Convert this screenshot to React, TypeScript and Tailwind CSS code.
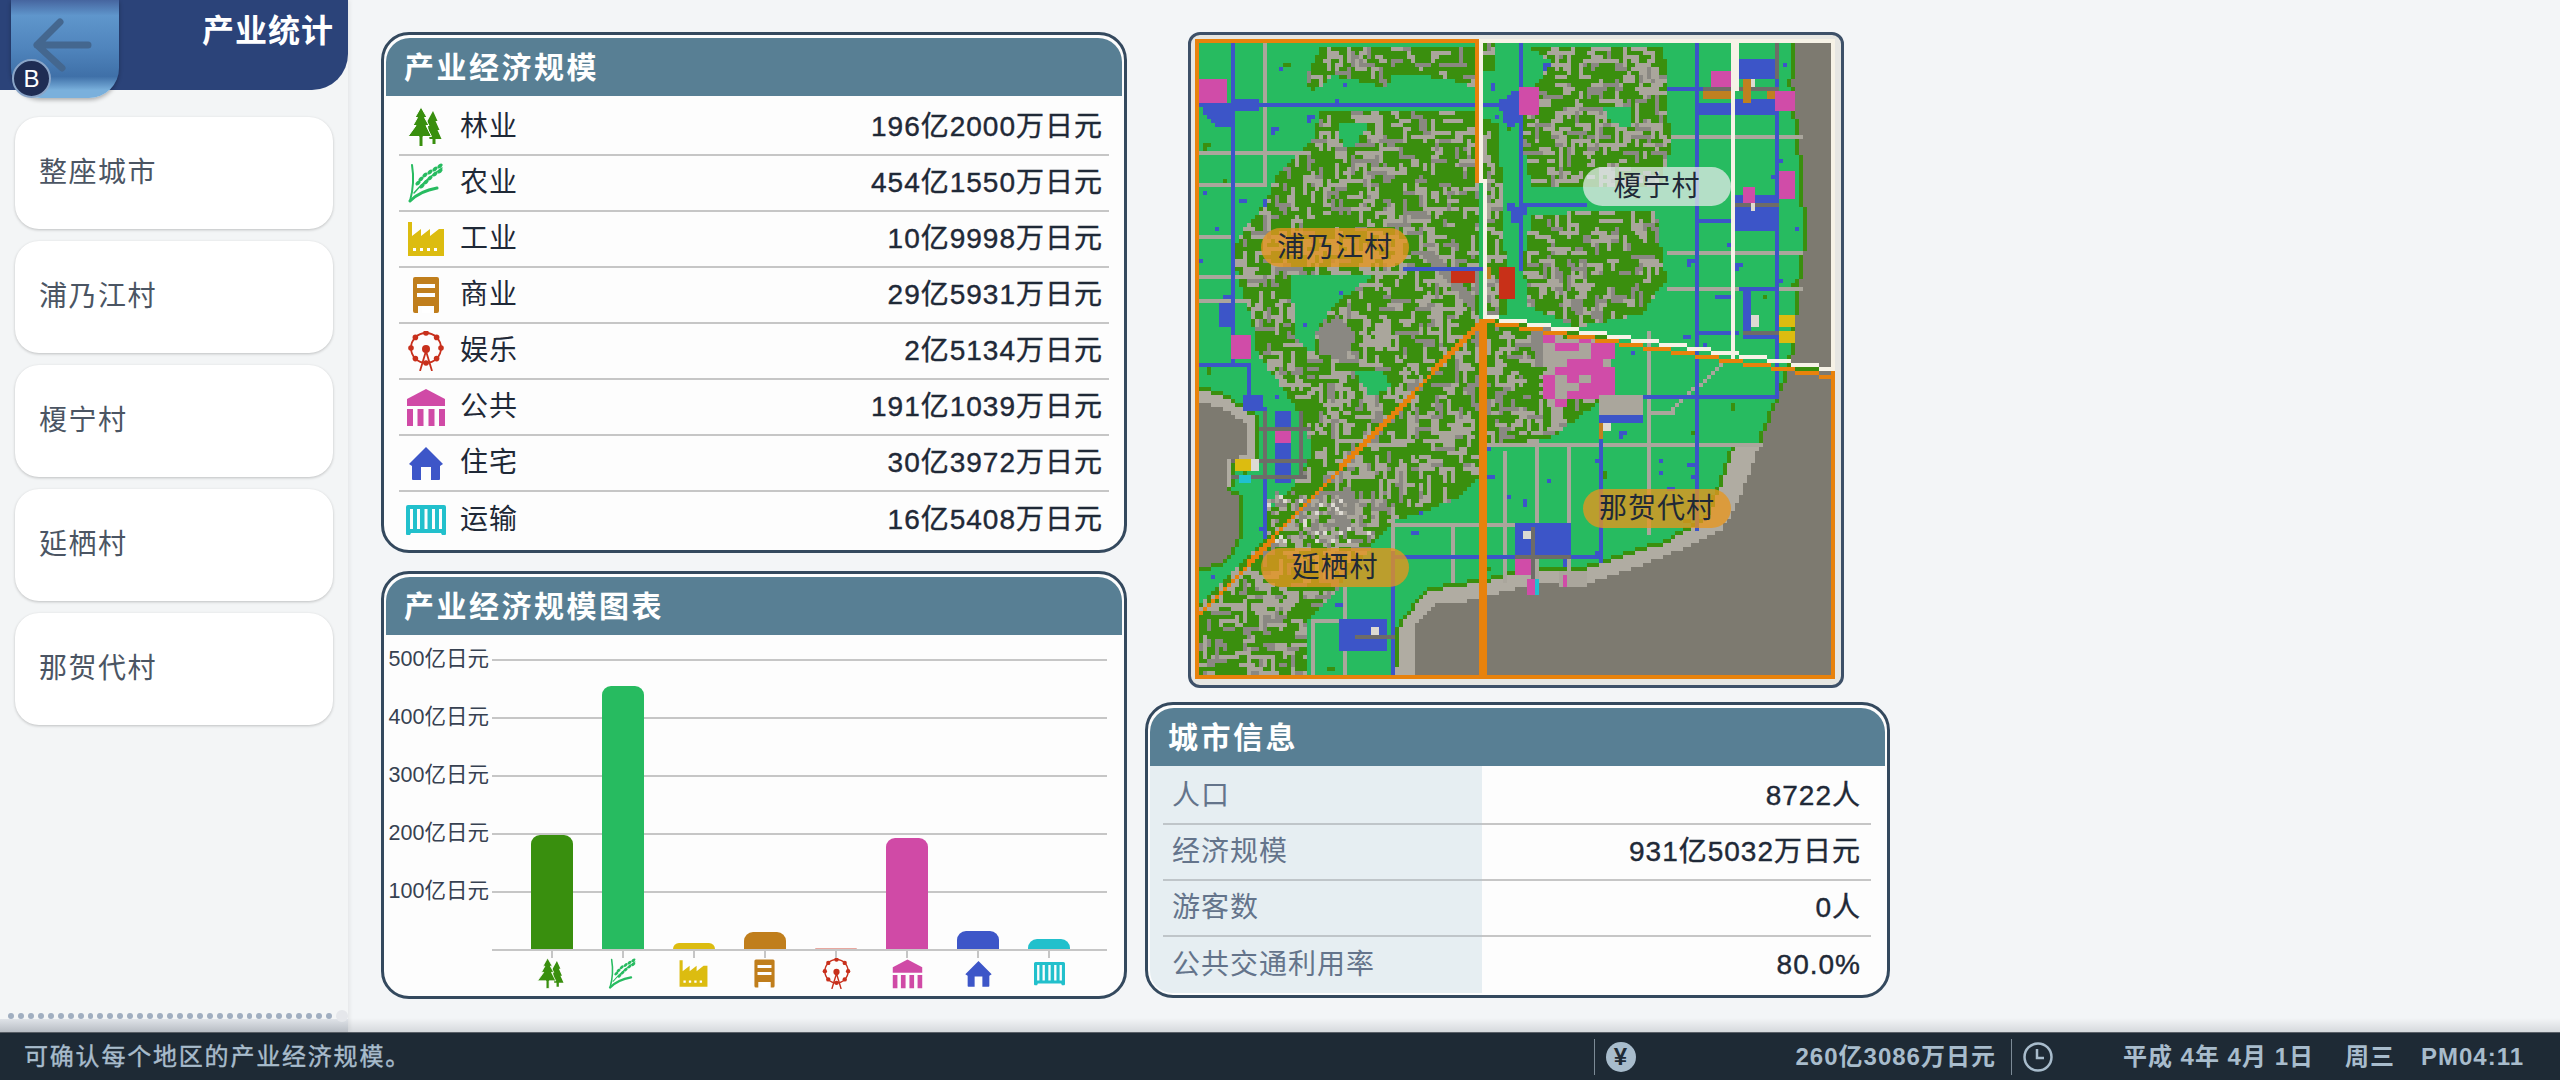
import type { ReactNode } from "react";

// tile map: 160 x 160 tiles at 4px. Coordinates below were traced from a zoomed crop.
const N = 160;
const COLORS = ["#27bb60", "#3a8f0e", "#aaa69c", "#8a8882", "#3c55c8", "#6e6c68", "#d04ca8", "#c83018", "#dcbc10", "#c08020", "#dddad2", "#20c0d0", "#7d7a70", "#b0aca2", "#e8820c", "#f6f2e6"];
const [G, F, R, M, B, D, P, X, Y, O, W, C, S, H, A, E] = COLORS.map((_, i) => i);

function buildMap() {
  const grid = new Uint8Array(N * N);
  const mask = new Uint8Array(N * N);
  let seed = 90210;
  const rnd = () => {
    seed = (seed + 0x6d2b79f5) | 0;
    let t = Math.imul(seed ^ (seed >>> 15), 1 | seed);
    t = (t + Math.imul(t ^ (t >>> 7), 61 | t)) ^ t;
    return ((t ^ (t >>> 14)) >>> 0) / 4294967296;
  };
  const tx = (z: number) => Math.round((z - 34) / 9.09);
  const ty = (z: number) => Math.round((z - 46) / 9.22);
  const put = (c: number, x: number, y: number) => {
    if (x >= 0 && y >= 0 && x < N && y < N) grid[y * N + x] = c;
  };
  const box = (c: number, x1: number, y1: number, x2: number, y2: number) => {
    for (let y = ty(y1); y < ty(y2); y++) for (let x = tx(x1); x < tx(x2); x++) put(c, x, y);
  };
  const line = (c: number, x1: number, y1: number, x2: number, y2: number) => {
    const a = [tx(x1), ty(y1)];
    const b = [tx(x2), ty(y2)];
    const n = Math.max(Math.abs(b[0] - a[0]), Math.abs(b[1] - a[1]), 1);
    for (let i = 0; i <= n; i++) put(c, Math.round(a[0] + ((b[0] - a[0]) * i) / n), Math.round(a[1] + ((b[1] - a[1]) * i) / n));
  };
  const poly = (pts: number[][], fn: (x: number, y: number) => void) => {
    const p = pts.map(([x, y]) => [(x - 34) / 9.09, (y - 46) / 9.22]);
    for (let y = 0; y < N; y++)
      for (let x = 0; x < N; x++) {
        let inside = false;
        for (let i = 0, j = p.length - 1; i < p.length; j = i++) {
          if (p[i][1] > y + 0.5 !== p[j][1] > y + 0.5 && x + 0.5 < ((p[j][0] - p[i][0]) * (y + 0.5 - p[i][1])) / (p[j][1] - p[i][1]) + p[i][0]) inside = !inside;
        }
        if (inside) fn(x, y);
      }
  };
  const fill = (c: number, pts: number[][]) => poly(pts, (x, y) => put(c, x, y));
  const forest = (pts: number[][]) =>
    poly(pts, (x, y) => {
      put(F, x, y);
      mask[y * N + x] = 1;
    });
  const clearing = (pts: number[][]) =>
    poly(pts, (x, y) => {
      put(G, x, y);
      mask[y * N + x] = 0;
    });

  // forests
  forest([[320, 215], [300, 280], [220, 360], [190, 430], [140, 490], [120, 540], [140, 620], [165, 700], [170, 760], [280, 920], [300, 1000], [270, 1060], [200, 1140], [190, 1200], [40, 1350], [40, 1530], [290, 1530], [290, 1390], [360, 1310], [480, 1160], [620, 1110], [680, 1060], [680, 215]]);
  forest([[285, 140], [320, 60], [680, 60], [680, 160], [600, 135], [480, 130], [460, 185], [300, 165]]);
  forest([[780, 60], [1100, 60], [1115, 300], [1090, 385], [800, 385], [780, 300], [780, 180], [850, 100]]);
  forest([[800, 450], [1080, 440], [1105, 600], [1050, 680], [900, 710], [790, 660], [780, 560]]);
  forest([[690, 690], [980, 730], [980, 860], [850, 960], [780, 985], [690, 990]]);
  forest([[690, 55], [720, 55], [720, 120], [690, 120]]);
  forest([[690, 230], [725, 240], [745, 680], [690, 680]]);
  clearing([[250, 590], [440, 590], [360, 650], [320, 700], [300, 770], [265, 740]]);
  clearing([[400, 815], [460, 810], [480, 850], [430, 870]]);
  clearing([[350, 130], [480, 160], [600, 150], [680, 165], [680, 195], [300, 195], [300, 170]]);
  clearing([[960, 200], [1030, 200], [1020, 250], [980, 240]]);
  clearing([[360, 240], [430, 240], [400, 290], [370, 300]]);

  // maze of paths through the forest
  for (let i = 0; i < 4200; i++) {
    let x = Math.floor(rnd() * N);
    let y = Math.floor(rnd() * N);
    if (!mask[y * N + x]) continue;
    const c = rnd() < 0.68 ? R : M;
    let dir = Math.floor(rnd() * 4);
    const len = 2 + Math.floor(rnd() * 5);
    for (let s = 0; s < len; s++) {
      if (mask[y * N + x]) put(c, x, y);
      if (rnd() < 0.45) dir = Math.floor(rnd() * 4);
      x += [1, 0, -1, 0][dir];
      y += [0, 1, 0, -1][dir];
      if (x < 0 || y < 0 || x >= N || y >= N) break;
    }
  }
  // solid grey clumps
  fill(M, [[310, 720], [360, 680], [400, 730], [370, 790], [320, 770]]);
  fill(M, [[340, 1090], [400, 1090], [390, 1180], [340, 1170]]);
  fill(M, [[540, 535], [580, 535], [670, 640], [670, 680], [620, 620]]);
  fill(M, [[790, 710], [850, 710], [850, 810], [810, 800]]);
  for (let i = 0; i < 220; i++) {
    const x = tx(200 + rnd() * 240);
    const y = ty(1090 + rnd() * 120);
    const r = rnd();
    put(r < 0.2 ? W : r < 0.65 ? R : M, x, y);
  }

  // water and shore
  fill(H, [[690, 1300], [800, 1270], [920, 1270], [1100, 1210], [1200, 1150], [1240, 1050], [1260, 990], [1320, 990], [1300, 1100], [1260, 1170], [1100, 1250], [920, 1310], [690, 1340]]);
  fill(S, [[690, 1335], [800, 1300], [930, 1300], [1100, 1240], [1230, 1180], [1270, 1110], [1310, 1000], [1385, 810], [1500, 810], [1500, 1530], [690, 1530]]);
  fill(S, [[1400, 55], [1500, 55], [1500, 810], [1390, 800], [1400, 700], [1415, 570], [1425, 500], [1410, 300], [1392, 150]]);
  fill(H, [[40, 855], [100, 870], [170, 920], [170, 1010], [120, 1010], [120, 1080], [40, 1080]]);
  fill(S, [[40, 880], [100, 900], [150, 930], [150, 1000], [108, 1020], [108, 1085], [130, 1100], [130, 1200], [100, 1250], [40, 1270]]);
  fill(H, [[490, 1530], [500, 1400], [560, 1320], [680, 1300], [680, 1530]]);
  fill(S, [[535, 1530], [535, 1400], [580, 1345], [680, 1340], [680, 1530]]);

  // dark fringe along the water
  const copy = grid.slice();
  for (let y = 1; y < N - 1; y++)
    for (let x = 1; x < N - 1; x++) {
      if (copy[y * N + x] !== G) continue;
      const n = [copy[y * N + x + 1], copy[y * N + x - 1], copy[(y + 1) * N + x], copy[(y - 1) * N + x]];
      if (n.includes(S) || n.includes(H)) put(F, x, y);
    }

  // scattered blue and green specks on the farm land
  for (let i = 0; i < 240; i++) {
    const x = Math.floor(rnd() * N);
    const y = Math.floor(rnd() * N);
    if (grid[y * N + x] !== G) continue;
    const c = rnd() < 0.72 ? B : F;
    put(c, x, y);
    if (rnd() < 0.5) put(c, x + 1, y);
    if (rnd() < 0.3) put(c, x, y + 1);
  }

  // grey roads
  [[186, 55, 186, 380], [45, 308, 290, 308], [45, 382, 186, 382], [1120, 270, 1410, 270], [1110, 533, 1410, 533], [1110, 615, 1410, 615], [700, 975, 1320, 975], [1060, 720, 1060, 1180], [1060, 900, 1120, 900], [1110, 900, 1230, 780], [730, 1000, 730, 1290], [805, 975, 805, 1290], [877, 975, 877, 1290], [480, 1163, 770, 1163], [476, 1163, 476, 1230], [615, 1163, 615, 1290], [296, 1385, 296, 1520], [366, 1310, 366, 1520], [296, 1380, 366, 1380], [45, 495, 110, 495], [45, 588, 130, 588], [45, 642, 150, 642], [150, 642, 170, 700]].forEach(([a, b, c, d]) => line(R, a, b, c, d));

  // blue zones
  fill(B, [[45, 195], [180, 185], [180, 210], [125, 210], [125, 255], [90, 250], [60, 225]]);
  fill(B, [[720, 195], [770, 160], [770, 240], [745, 250]]);
  fill(B, [[745, 420], [790, 440], [775, 470], [750, 465]]);
  box(B, 90, 650, 125, 710);
  box(B, 765, 1160, 890, 1240);
  box(B, 360, 1380, 472, 1460);
  box(B, 215, 905, 252, 1070);
  box(B, 145, 870, 185, 905);
  box(B, 1265, 95, 1350, 140);
  box(B, 1170, 190, 1250, 220);
  box(B, 1265, 180, 1352, 220);
  box(B, 1265, 410, 1350, 490);
  box(B, 1275, 630, 1300, 740);
  box(B, 1300, 715, 1350, 740);
  [[40, 198, 770, 198], [112, 55, 112, 780], [768, 55, 768, 570], [770, 420, 920, 420], [1170, 55, 1170, 1170], [1352, 55, 1352, 860], [945, 862, 1352, 862], [948, 862, 948, 1240], [480, 1236, 948, 1236], [478, 1230, 478, 1520], [150, 790, 150, 890], [45, 790, 150, 790], [187, 890, 187, 1190], [510, 570, 690, 570], [1110, 160, 1250, 160], [1170, 458, 1352, 458], [1270, 622, 1352, 622], [1170, 718, 1260, 718]].forEach(([a, b, c, d]) => line(B, a, b, c, d));

  // pink district, in small lots rather than single tiles
  fill(R, [[825, 730], [975, 740], [985, 850], [835, 895]]);
  for (let y = ty(730); y < ty(890); y += 2)
    for (let x = tx(825); x < tx(975); x += 3) {
      if (grid[y * N + x] !== R || rnd() > 0.72) continue;
      put(P, x, y);
      put(P, x + 1, y);
      put(P, x + 2, y);
      put(P, x, y + 1);
      put(P, x + 1, y + 1);
      put(P, x + 2, y + 1);
    }
  box(R, 955, 870, 1055, 912);
  box(B, 955, 912, 1055, 932);
  box(R, 860, 1270, 925, 1310);
  box(P, 868, 1285, 882, 1305);

  // dark town roads
  [[1190, 160, 1350, 160], [1265, 425, 1355, 425], [1275, 716, 1390, 716], [1352, 55, 1352, 130], [180, 938, 285, 938], [120, 1015, 280, 1015], [120, 1048, 280, 1048], [185, 900, 185, 1050], [270, 900, 270, 1050], [800, 1170, 800, 1280], [765, 1236, 880, 1236], [400, 1420, 475, 1420]].forEach(([a, b, c, d]) => line(D, a, b, c, d));

  // buildings
  const blocks: [number, number[][]][] = [
    [P, [[45, 140, 108, 195], [772, 158, 818, 222], [115, 732, 162, 787], [1210, 120, 1250, 158], [1356, 165, 1402, 212], [1358, 350, 1402, 418], [1275, 388, 1310, 420], [215, 945, 252, 980], [765, 1240, 802, 1278], [790, 1288, 810, 1325]]],
    [X, [[618, 583, 672, 612], [727, 573, 765, 648]]],
    [O, [[690, 575, 710, 595], [1190, 165, 1250, 185], [1275, 140, 1295, 190], [1330, 165, 1350, 185], [955, 935, 965, 970]]],
    [Y, [[125, 1018, 162, 1044], [1358, 686, 1394, 712], [1358, 722, 1394, 748]]],
    [W, [[162, 1018, 180, 1044], [1295, 138, 1310, 158], [1302, 686, 1320, 712], [1295, 428, 1310, 445], [965, 935, 982, 952], [782, 1176, 800, 1194], [435, 1398, 455, 1416]]],
    [C, [[135, 1055, 160, 1072], [810, 1288, 818, 1325]]],
  ];
  blocks.forEach(([c, list]) => list.forEach(([a, b, d, e]) => box(c, a, b, d, e)));

  // district borders
  line(E, 680, 50, 1480, 50);
  line(E, 1480, 50, 1480, 808);
  line(E, 680, 50, 680, 370);
  line(E, 690, 370, 690, 680);
  line(E, 690, 680, 1480, 806);
  line(E, 1255, 50, 1255, 770);
  line(E, 1265, 50, 1265, 160);
  line(A, 38, 50, 672, 50);
  line(A, 38, 50, 38, 1515);
  line(A, 670, 50, 670, 370);
  line(A, 38, 1515, 1480, 1515);
  line(A, 1480, 815, 1480, 1515);
  line(A, 680, 690, 1480, 816);
  line(A, 680, 690, 40, 1360);
  line(A, 689, 690, 45, 1365);
  line(A, 676, 690, 676, 1515);
  line(A, 686, 690, 686, 1515);

  return COLORS.map((_, c) => {
    let d = "";
    for (let y = 0; y < N; y++) {
      let x = 0;
      while (x < N) {
        if (grid[y * N + x] !== c) {
          x++;
          continue;
        }
        let e = x;
        while (e < N && grid[y * N + e] === c) e++;
        d += `M${x} ${y}h${e - x}v1h-${e - x}z`;
        x = e;
      }
    }
    return d;
  });
}

const mapPaths = buildMap();

function TreeIcon({ className }: { className: string }) {
  return (
    <svg viewBox="0 0 40 40" className={className}>
      <path fill="#398f0e" d="M27 4l4.500 10h-2l4 9h-2l4 9h-6v5h-3v-5h-3l-2-18z" />
      <path fill="#398f0e" stroke="#fff" strokeWidth="1" d="M15 0l6 10.500h-2.500l4.500 8h-3l5.500 11h-8.500v10h-4v-10h-11l8-11h-3l4.500-8h-2.500z" />
    </svg>
  );
}

function RiceIcon({ className }: { className: string }) {
  return (
    <svg viewBox="0 0 40 40" className={className}>
      <g fill="none" stroke="#27bb60" strokeLinecap="round">
        <path strokeWidth="2" d="M4 38Q9 20 6 2" />
        <path strokeWidth="3" d="M4 38Q14 28 31 25" />
        <path strokeWidth="1.500" d="M8 30Q18 18 36 5" />
      </g>
      <g fill="#27bb60">
        {[[12, 20], [16, 23], [15, 16], [20, 19], [19, 12], [24, 15], [24, 9], [29, 11], [29, 6], [34, 8], [34, 3]].map(([x, y]) => (
          <ellipse key={`${x}-${y}`} cx={x} cy={y} rx="3" ry="1.800" transform={`rotate(-40 ${x} ${y})`} />
        ))}
      </g>
    </svg>
  );
}

function FactoryIcon({ className }: { className: string }) {
  return (
    <svg viewBox="0 0 40 40" className={className}>
      <path fill="#dcbc10" d="M2 3h4v14l9-7v7l9-7v7l9-7 5 0v27h-36z" />
      <path fill="#fff" d="M7 29h3v3h-3zM14 29h3v3h-3zM21 29h3v3h-3zM28 29h3v3h-3z" />
    </svg>
  );
}

function StoreIcon({ className }: { className: string }) {
  return (
    <svg viewBox="0 0 40 40" className={className}>
      <path fill="#c07e1c" fillRule="evenodd" d="M9 2h22a2 2 0 0 1 2 2v32a2 2 0 0 1-2 2h-3v-7h-16v7h-3a2 2 0 0 1-2-2v-32a2 2 0 0 1 2-2zM11 9v4h18v-4zM11 18v4h18v-4z" />
      <rect x="16" y="31" width="8" height="7" fill="#fff" />
      <rect x="9" y="26" width="22" height="3" fill="#c07e1c" />
    </svg>
  );
}

function WheelIcon({ className }: { className: string }) {
  const spots = [0, 45, 90, 135, 180, 225, 270, 315].map((a) => [20 + 15 * Math.cos((a * Math.PI) / 180), 17 + 15 * Math.sin((a * Math.PI) / 180)]);
  return (
    <svg viewBox="0 0 40 40" className={className}>
      <circle cx="20" cy="17" r="15" fill="none" stroke="#c8301c" strokeWidth="1.800" />
      {spots.map(([x, y]) => (
        <circle key={`${x}-${y}`} cx={x} cy={y} r="2.800" fill="#c8301c" />
      ))}
      <circle cx="20" cy="18" r="4" fill="#c8301c" />
      <path fill="none" stroke="#c8301c" strokeWidth="1.800" d="M20 20L14 40M20 20L26 40" />
    </svg>
  );
}

function BankIcon({ className }: { className: string }) {
  return (
    <svg viewBox="0 0 40 40" className={className}>
      <path fill="#d04aa6" d="M20 2l19 10v7h-38v-7z" />
      <path fill="#d04aa6" d="M1 22h6v17h-6zM11.500 22h6v17h-6zM22.500 22h6v17h-6zM33 22h6v17h-6z" />
    </svg>
  );
}

function HouseIcon({ className }: { className: string }) {
  return (
    <svg viewBox="0 0 40 40" className={className}>
      <path fill="#3d56c8" d="M20 4l17 17-3 2v13a1 1 0 0 1-1 1h-8v-13h-10v13h-8a1 1 0 0 1-1-1v-13l-3-2z" />
    </svg>
  );
}

function ContainerIcon({ className }: { className: string }) {
  return (
    <svg viewBox="0 0 40 40" className={className}>
      <path fill="#22c0cc" fillRule="evenodd" d="M2 5h36a2 2 0 0 1 2 2v27a1 1 0 0 1-1 1h-3l-1-2h-30l-1 2h-3a1 1 0 0 1-1-1v-27a2 2 0 0 1 2-2zM4 9v20h3v-20zM11 9v20h3v-20zM18.500 9v20h3v-20zM26 9v20h3v-20zM33 9v20h3v-20z" />
    </svg>
  );
}

const industries = [
  { name: "林业", value: "196亿2000万日元", amount: 196.2, color: "#398f0e", Icon: TreeIcon },
  { name: "农业", value: "454亿1550万日元", amount: 454.15, color: "#27bb60", Icon: RiceIcon },
  { name: "工业", value: "10亿9998万日元", amount: 11, color: "#dcbc10", Icon: FactoryIcon },
  { name: "商业", value: "29亿5931万日元", amount: 29.6, color: "#c07e1c", Icon: StoreIcon },
  { name: "娱乐", value: "2亿5134万日元", amount: 2.5, color: "#e8a8a0", Icon: WheelIcon },
  { name: "公共", value: "191亿1039万日元", amount: 191.1, color: "#d04aa6", Icon: BankIcon },
  { name: "住宅", value: "30亿3972万日元", amount: 30.4, color: "#3d56c8", Icon: HouseIcon },
  { name: "运输", value: "16亿5408万日元", amount: 16.5, color: "#22c0cc", Icon: ContainerIcon },
];

const areas = ["整座城市", "浦乃江村", "榎宁村", "延栖村", "那贺代村"];

const cityInfo = [
  { label: "人口", value: "8722人" },
  { label: "经济规模", value: "931亿5032万日元" },
  { label: "游客数", value: "0人" },
  { label: "公共交通利用率", value: "80.0%" },
];

const mapLabels = [
  { name: "浦乃江村", pos: "left-[66px] top-[189px]", bg: "bg-[#e8961ec4]" },
  { name: "榎宁村", pos: "left-[388px] top-[128px]", bg: "bg-[#dfeae6c4]" },
  { name: "延栖村", pos: "left-[66px] top-[509px]", bg: "bg-[#e8961ec4]" },
  { name: "那贺代村", pos: "left-[388px] top-[450px]", bg: "bg-[#e8961ec4]" },
];

function Panel({ title, className, children }: { title: string; className: string; children: ReactNode }) {
  return (
    <section className={`flex flex-col rounded-[28px] border-[3px] border-[#34495e] bg-[#fdfdfd] px-[2px] pt-[3px] ${className}`}>
      <h2 className="flex h-[58px] shrink-0 items-center rounded-t-[24px] bg-[#587f94] pl-[18px] text-[30px] font-bold tracking-[2.500px] text-white">{title}</h2>
      {children}
    </section>
  );
}

export default function App() {
  return (
    <div className="flex h-[1080px] w-[2560px] flex-col overflow-hidden bg-[#f3f5f7] [font-family:'Liberation_Sans','Noto_Sans_CJK_SC',sans-serif]">
      <div className="flex min-h-0 flex-1">
        {/* sidebar */}
        <aside className="relative flex w-[348px] shrink-0 flex-col bg-[#f3f5f6] shadow-[2px_0_4px_rgba(0,0,0,0.06)]">
          <div className="flex h-[90px] items-start justify-end rounded-br-[36px] bg-[#2b4379] pr-[14px] pt-[10px] text-[32px] font-bold leading-[42px] tracking-[1px] text-white">产业统计</div>
          <div className="absolute left-[11px] top-0 h-[98px] w-[108px] rounded-b-[30px] bg-[linear-gradient(#46659f_0%,#5f96cc_16%,#4f84bc_50%,#3f70a8_78%,#7ab0dc_92%)] shadow-[0_2px_4px_rgba(0,0,0,0.3)]">
            <svg viewBox="0 0 108 98" className="h-full w-full">
              <path d="M77 45H26M49 22L26 45L51 68" fill="none" stroke="#44678f" strokeWidth="7" strokeLinecap="round" strokeLinejoin="round" />
            </svg>
          </div>
          <div className="absolute left-[12px] top-[59px] flex h-[39px] w-[39px] items-center justify-center rounded-full border-2 border-[#8aa5c8] bg-[#1f2d54] text-[24px] text-white">B</div>
          <nav className="flex flex-col gap-[12px] px-[15px] pt-[27px]">
            {areas.map((area) => (
              <div key={area} className="flex h-[112px] items-center rounded-[24px] bg-white pl-[24px] text-[28px] tracking-[1.500px] text-[#4b5563] shadow-[0_1px_3px_rgba(0,0,0,0.22)]">
                {area}
              </div>
            ))}
          </nav>
          <div className="relative z-10 -mb-[3px] mt-auto flex items-center gap-[4px] pl-[8px]">
            {Array.from({ length: 33 }).map((_, i) => (
              <span key={i} className="h-[6px] w-[6px] rounded-full bg-[#a0aec0]" />
            ))}
            <span className="h-[12px] w-[12px] rounded-full bg-[#e5e7eb]" />
          </div>
          <div className="h-[13px] bg-[linear-gradient(#dfe3e8,#b8bdc4)]" />
        </aside>

        <div className="flex min-w-0 flex-1 flex-col">
          <main className="flex flex-1 pl-[33px] pt-[32px]">
            <div className="flex w-[746px] flex-col gap-[18px]">
              <Panel title="产业经济规模" className="h-[521px]">
                <div className="flex flex-col px-[13px] pt-[4px]">
                  {industries.map(({ name, value, Icon }, i) => (
                    <div key={name} className={`flex h-[56px] shrink-0 items-center pl-[5px] pr-[6px] text-[28px] tracking-[1px] text-[#1f2937] ${i < 7 ? "border-b-2 border-[#c6c6c6]" : ""}`}>
                      <span className="flex h-[44px] w-[44px] items-center justify-center">
                        <Icon className="h-[40px] w-[40px]" />
                      </span>
                      <span className="ml-[12px]">{name}</span>
                      <span className="ml-auto [-webkit-text-stroke:0.4px_currentColor]">{value}</span>
                    </div>
                  ))}
                </div>
              </Panel>

              <Panel title="产业经济规模图表" className="h-[428px]">
                <div className="relative flex flex-col pt-[24px]">
                  {[500, 400, 300, 200, 100].map((v) => (
                    <div key={v} className="flex h-[58px] items-start pr-[15px]">
                      <span className="-mt-[14px] w-[103px] shrink-0 text-right text-[21.500px] leading-[28px] text-[#374151]">{v}亿日元</span>
                      <span className="ml-[3px] h-[2px] flex-1 bg-[#c6c6c6]" />
                    </div>
                  ))}
                  <div className="flex pl-[106px] pr-[15px]">
                    <span className="h-[2px] flex-1 bg-[#c6c6c6]" />
                  </div>
                  {/* bars sit over the grid lines */}
                  <div className="absolute left-[130px] top-[24px] flex h-[290px] items-end">
                    {industries.map((item) => (
                      <div key={item.name} className="flex w-[71.140px] justify-center">
                        <div className="w-[42px] rounded-t-[9px]" style={{ height: item.amount * 0.58, backgroundColor: item.color }} />
                      </div>
                    ))}
                  </div>
                  <div className="flex pl-[130px]">
                    {industries.map(({ name, Icon }) => (
                      <div key={name} className="flex w-[71.140px] flex-col items-center">
                        <span className="h-[7px] w-[2px] bg-[#c6c6c6]" />
                        <Icon className="h-[31px] w-[31px]" />
                      </div>
                    ))}
                  </div>
                </div>
              </Panel>
            </div>

            <div className="ml-[18px] flex w-[745px] flex-col">
              <div className="ml-[43px] h-[656px] w-[656px] rounded-[12px] border-[3px] border-[#3d5068] bg-[#e6e6e2] p-[4px]">
                <div className="relative h-[640px] w-[640px]">
                  <svg viewBox="0 0 160 160" className="h-full w-full" shapeRendering="crispEdges">
                    {mapPaths.map((d, i) => (
                      <path key={COLORS[i]} d={d} fill={COLORS[i]} />
                    ))}
                  </svg>
                  {mapLabels.map((l) => (
                    <div key={l.name} className={`absolute flex h-[39px] w-[148px] items-center justify-center rounded-full text-[28px] tracking-[1px] text-[#1f2937] ${l.pos} ${l.bg}`}>
                      {l.name}
                    </div>
                  ))}
                </div>
              </div>

              <Panel title="城市信息" className="mt-[14px] h-[296px]">
                <div className="flex flex-1 pb-[4px]">
                  <div className="flex w-[332px] flex-col rounded-bl-[22px] bg-[#e6eef2] pl-[13px] pt-[3px]">
                    {cityInfo.map((row, i) => (
                      <div key={row.label} className={`flex h-[56px] items-center pl-[9px] text-[28px] tracking-[1px] text-[#64748b] ${i < 3 ? "border-b-2 border-[#bfc5c9]" : ""}`}>
                        {row.label}
                      </div>
                    ))}
                  </div>
                  <div className="flex flex-1 flex-col pr-[14px] pt-[3px]">
                    {cityInfo.map((row, i) => (
                      <div key={row.label} className={`flex h-[56px] items-center justify-end pr-[10px] text-[28px] tracking-[1px] text-[#1f2937] [-webkit-text-stroke:0.4px_currentColor] ${i < 3 ? "border-b-2 border-[#c6c6c6]" : ""}`}>
                        {row.value}
                      </div>
                    ))}
                  </div>
                </div>
              </Panel>
            </div>
          </main>
          <div className="h-[14px] bg-[linear-gradient(#f3f5f700,#d6d9dd)]" />
        </div>
      </div>

      {/* status bar */}
      <footer className="flex h-[48px] shrink-0 items-center border-t border-[#5a6068] bg-[#1e2a35] pl-[24px] pr-[36px] text-[24px] leading-none text-[#a8bccc]">
        <span className="tracking-[1.800px] [-webkit-text-stroke:0.4px_currentColor]">可确认每个地区的产业经济规模。</span>
        <div className="ml-auto flex items-center tracking-[1px]">
          <span className="h-[36px] w-px bg-[#7c8a96]" />
          <span className="ml-[11px] flex h-[30px] w-[30px] items-center justify-center rounded-full bg-[#a8bccc] text-[24px] font-bold text-[#1e2a35]">¥</span>
          <span className="w-[360px] text-right font-bold">260亿3086万日元</span>
          <span className="ml-[15px] h-[36px] w-px bg-[#7c8a96]" />
          <svg viewBox="0 0 30 30" className="ml-[11px] h-[30px] w-[30px]">
            <circle cx="15" cy="15" r="13.500" fill="none" stroke="#a8bccc" strokeWidth="2.500" />
            <path d="M14 7v9h7" fill="none" stroke="#a8bccc" strokeWidth="2.500" />
          </svg>
          <span className="ml-[70px] w-[222px] font-bold whitespace-pre">平成 4年 4月 1日</span>
          <span className="w-[76px] font-bold">周三</span>
          <span className="font-bold">PM04:11</span>
        </div>
      </footer>
    </div>
  );
}
